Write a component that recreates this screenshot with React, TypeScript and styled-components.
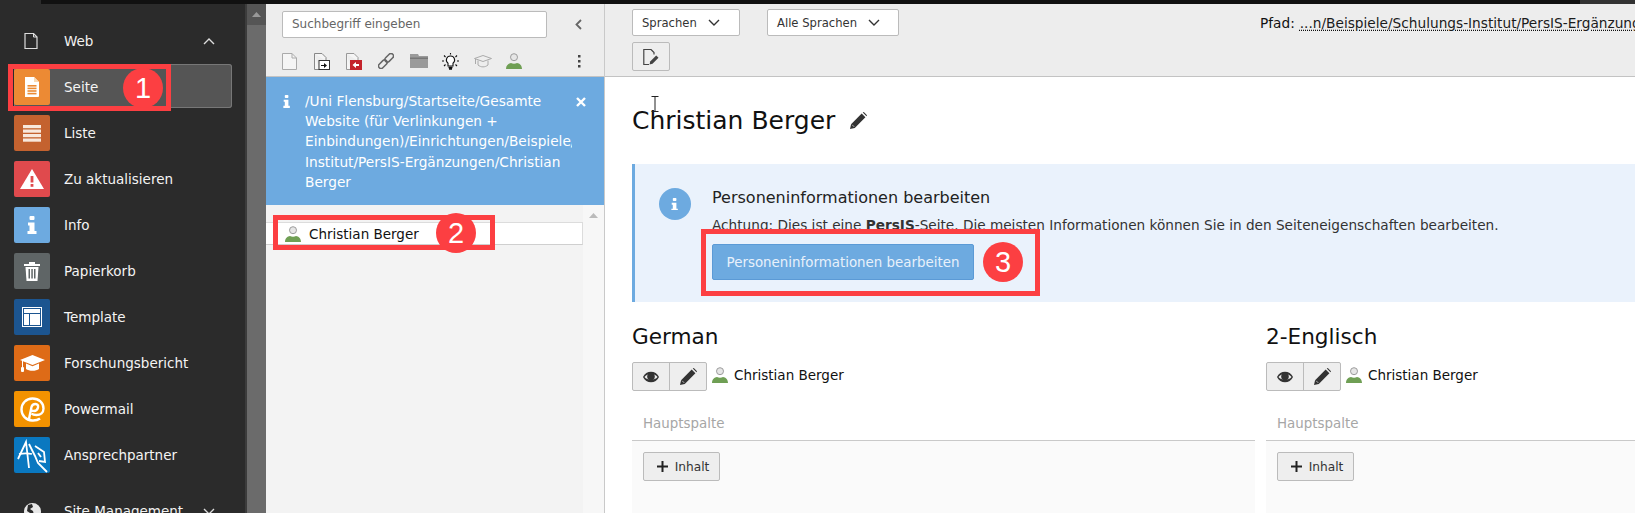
import React from "react";
import styled, { createGlobalStyle } from "styled-components";

const Global = createGlobalStyle`
  html, body { margin: 0; padding: 0; height: 100%; overflow: hidden; background: #fff; }
  body { font-family: "DejaVu Sans", Verdana, sans-serif; font-size: 12px; color: #111; }
  * { box-sizing: border-box; }
`;

const Page = styled.div`
  position: relative;
  width: 1635px;
  height: 513px;
  overflow: hidden;
  display: flex;
  flex-direction: column;
  background: #2b2b2b;
`;
const TopBar = styled.div`
  height: 4px;
  flex: none;
  margin-left: 41px;
  background: linear-gradient(to right, #111 0, #111 1539px, #333 1539px);
`;
const Body = styled.div`
  flex: 1;
  min-height: 0;
  display: flex;
`;
const Sidebar = styled.nav`
  width: 245px;
  flex: none;
  padding-top: 14px;
  background: #2b2b2b;
  color: #fff;
  overflow: hidden;
`;
const GroupHead = styled.div<{ $gap?: number }>`
  height: 46px;
  display: flex;
  align-items: center;
  padding-left: 24px;
  margin-top: ${(p) => p.$gap ?? 0}px;
  font-size: 13.5px;
  color: #f2f2f2;
`;
const GroupIcon = styled.span`
  width: 40px;
  display: flex;
  flex: none;
`;
const GroupChevron = styled.span`
  display: flex;
  margin-left: auto;
  margin-right: 30px;
`;
const MenuItem = styled.div<{ $active?: boolean }>`
  height: 44px;
  width: 218px;
  margin: 0 0 2px 14px;
  padding-top: 1px;
  display: flex;
  align-items: center;
  gap: 14px;
  font-size: 13.5px;
  color: #f4f4f4;
  border-radius: 3px;
  background: ${(p) => (p.$active ? "#555" : "transparent")};
  box-shadow: ${(p) => (p.$active ? "inset 0 0 0 1px #777" : "none")};
`;
const IconBox = styled.span<{ $bg: string }>`
  width: 36px;
  height: 36px;
  flex: none;
  border-radius: 2px;
  background: ${(p) => p.$bg};
  display: flex;
  align-items: center;
  justify-content: center;
  margin-top: 1px;
`;
const ScrollStrip = styled.div`
  width: 2px;
  flex: none;
  background: #3c3c3c;
`;
const DarkScroll = styled.div`
  width: 19px;
  flex: none;
  background: #6b6b6b;
  display: flex;
  flex-direction: column;
`;
const DarkScrollUp = styled.div`
  height: 21px;
  background: #555;
  display: flex;
  align-items: center;
  justify-content: center;
`;
const TreePanel = styled.section`
  width: 339px;
  flex: none;
  display: flex;
  flex-direction: column;
  background: #f3f3f3;
  border-right: 1px solid #c9c9c9;
`;
const TreeHead = styled.div`
  height: 73px;
  flex: none;
  background: #ededed;
  border-bottom: 1px solid #c3c3c3;
  padding: 7px 16px 0 16px;
`;
const SearchRow = styled.div`
  display: flex;
  align-items: center;
  height: 27px;
  justify-content: space-between;
  padding-right: 6px;
`;
const Search = styled.div`
  width: 265px;
  height: 27px;
  background: #fff;
  border: 1px solid #bbb;
  border-radius: 2px;
  padding-left: 9px;
  font-size: 12px;
  line-height: 25px;
  color: #666;
`;
const TreeTools = styled.div`
  display: flex;
  align-items: center;
  height: 20px;
  margin-top: 13px;
`;
const ToolSlot = styled.span`
  width: 32px;
  flex: none;
  display: flex;
`;
const Kebab = styled.span`
  margin-left: auto;
  margin-right: 7px;
  display: flex;
`;
const Notice = styled.div`
  height: 128px;
  flex: none;
  background: #6daae0;
  color: #fff;
  display: flex;
  padding: 14px 14px 0 17px;
  font-size: 13.7px;
  line-height: 20.2px;
`;
const NoticeIcon = styled.span`
  width: 22px;
  flex: none;
  padding-top: 2px;
`;
const NoticeText = styled.div`
  width: 267px;
  flex: none;
  overflow: hidden;
  white-space: nowrap;
`;
const NoticeClose = styled.span`
  margin-left: 4px;
  padding: 1px 0 0 0;
`;
const TreeBody = styled.div`
  flex: 1;
  display: flex;
`;
const TreeList = styled.div`
  flex: 1;
  padding-top: 17px;
`;
const TreeRow = styled.div`
  height: 23px;
  background: #fff;
  border: 1px solid #dcdcdc;
  border-bottom-color: #cfcfcf;
  border-left: 0;
  display: flex;
  align-items: center;
  gap: 8px;
  padding-left: 19px;
  font-size: 13.5px;
  color: #111;
`;
const TreeScroll = styled.div`
  width: 21px;
  flex: none;
  background: #f7f7f7;
  display: flex;
  justify-content: center;
  padding-top: 8px;
`;
const Main = styled.main`
  flex: 1;
  min-width: 0;
  display: flex;
  flex-direction: column;
  background: #fff;
`;
const DocHeader = styled.div`
  height: 73px;
  flex: none;
  background: #ededed;
  border-bottom: 1px solid #c3c3c3;
  padding: 5px 0 0 27px;
`;
const DocRow = styled.div`
  display: flex;
  align-items: center;
  height: 27px;
`;
const Select = styled.div<{ $w: number; $ml?: number }>`
  width: ${(p) => p.$w}px;
  height: 27px;
  margin-left: ${(p) => p.$ml ?? 0}px;
  background: #fff;
  border: 1px solid #bbb;
  border-radius: 2px;
  display: flex;
  align-items: center;
  gap: 11px;
  padding-left: 9px;
  font-size: 11.6px;
  color: #333;
`;
const PathBox = styled.div`
  margin-left: auto;
  width: 375px;
  overflow: hidden;
  white-space: nowrap;
  font-size: 13.7px;
  color: #111;
`;
const PathLink = styled.span`
  margin-left: 5px;
  text-decoration: underline dotted #111;
  text-underline-offset: 2px;
  color: #1b1b1b;
`;
const DocButton = styled.div`
  width: 38px;
  height: 29px;
  margin-top: 6px;
  background: #eee;
  border: 1px solid #bbb;
  border-radius: 2px;
  display: flex;
  align-items: center;
  justify-content: center;
`;
const Content = styled.div`
  flex: 1;
  padding: 24px 0 0 27px;
  min-height: 0;
`;
const TitleRow = styled.div`
  display: flex;
  align-items: center;
  gap: 15px;
  height: 38px;
`;
const Title = styled.h1`
  margin: 0;
  font-weight: 400;
  font-size: 25px;
  color: #111;
`;
const Callout = styled.div`
  margin-top: 25px;
  height: 138px;
  background: #eaf2fc;
  border-left: 3px solid #6daae0;
  display: flex;
  padding: 24px 0 0 24px;
`;
const CalloutIcon = styled.span`
  width: 32px;
  height: 32px;
  flex: none;
  border-radius: 50%;
  background: #6daae0;
  display: flex;
  align-items: center;
  justify-content: center;
`;
const CalloutBody = styled.div`
  margin-left: 21px;
`;
const CalloutTitle = styled.div`
  font-size: 16px;
  line-height: 20px;
  color: #222;
`;
const CalloutText = styled.p`
  margin: 9px 0 0;
  font-size: 13.65px;
  line-height: 16px;
  color: #333;
  white-space: nowrap;
`;
const PrimaryButton = styled.div`
  margin-top: 11px;
  width: 262px;
  height: 36px;
  background: #6daae0;
  border: 1px solid #5b9ad6;
  border-radius: 2px;
  display: flex;
  align-items: center;
  justify-content: center;
  font-size: 13.4px;
  color: #e8f1fb;
`;
const Columns = styled.div`
  display: flex;
  gap: 11px;
  margin-top: 21px;
`;
const Column = styled.div<{ $w: number }>`
  width: ${(p) => p.$w}px;
  flex: none;
`;
const ColumnTitle = styled.h2`
  margin: 0;
  font-weight: 400;
  font-size: 21.6px;
  line-height: 28px;
  color: #111;
`;
const ColumnTools = styled.div`
  display: flex;
  align-items: center;
  margin-top: 11px;
  gap: 5px;
  font-size: 13.5px;
`;
const BtnGroup = styled.div`
  display: flex;
  width: 75px;
  height: 29px;
  background: #eee;
  border: 1px solid #bbb;
  border-radius: 2px;
`;
const GroupBtn = styled.span<{ $first?: boolean }>`
  flex: 1;
  display: flex;
  align-items: center;
  justify-content: center;
  border-right: ${(p) => (p.$first ? "1px solid #bbb" : "0")};
`;
const PersonIcon = styled.span`
  display: flex;
  margin-top: -3px;
`;
const PersonName = styled.span`
  margin-left: 1px;
  margin-top: -4px;
  color: #111;
`;
const GridHead = styled.div`
  margin-top: 18px;
  height: 32px;
  padding-left: 11px;
  border-bottom: 1px solid #c9c9c9;
  color: #a6a6a6;
  font-size: 13.4px;
  line-height: 30px;
`;
const GridBody = styled.div`
  height: 80px;
  background: #fafafa;
  padding: 11px 0 0 11px;
`;
const AddButton = styled.div`
  width: 77px;
  height: 29px;
  background: #eee;
  border: 1px solid #bbb;
  border-radius: 2px;
  display: flex;
  align-items: center;
  justify-content: center;
  gap: 7px;
  padding-left: 3px;
  font-size: 12.2px;
  color: #333;
`;
const RedBox = styled.div<{ $l: number; $t: number; $w: number; $h: number }>`
  position: absolute;
  left: ${(p) => p.$l}px;
  top: ${(p) => p.$t}px;
  width: ${(p) => p.$w}px;
  height: ${(p) => p.$h}px;
  border: 5px solid #fc3f42;
  pointer-events: none;
`;
const Badge = styled.div<{ $x: number; $y: number }>`
  position: absolute;
  left: ${(p) => p.$x - 20}px;
  top: ${(p) => p.$y - 20}px;
  width: 40px;
  height: 40px;
  border-radius: 50%;
  background: #fc3f42;
  color: #fff;
  font-family: "Liberation Sans", Arial, sans-serif;
  font-size: 29px;
  line-height: 40px;
  text-align: center;
`;
const Cursor = styled.svg`
  position: absolute;
  left: 651px;
  top: 96px;
`;

type IP = { c?: string };

const PageOutline = () => (
  <svg width="14" height="16" viewBox="0 0 14 16" fill="none">
    <path d="M1 .5h8.500l3.500 3.500v11.500H1z" stroke="#ddd" strokeWidth="1.200" />
    <path d="M9.500.5V4H13" stroke="#ddd" />
  </svg>
);
const Chevron = ({ up, c = "#333" }: { up?: boolean; c?: string }) => (
  <svg width="12" height="7" viewBox="0 0 12 7" fill="none" stroke={c} strokeWidth="1.400">
    <path d={up ? "M1 6l5-5 5 5" : "M1 1l5 5 5-5"} />
  </svg>
);
const DocIcon = () => (
  <svg width="16" height="20" viewBox="0 0 16 20">
    <path d="M1 0h9l5 5v14a1 1 0 0 1-1 1H1z" fill="#fff" />
    <path d="M10 0l5 5h-5z" fill="#f8d9b4" />
    <g fill="#ec8a34">
      <rect x="3.500" y="8" width="9" height="1.600" />
      <rect x="3.500" y="10.600" width="9" height="1.600" />
      <rect x="3.500" y="13.200" width="9" height="1.600" />
      <rect x="3.500" y="15.800" width="9" height="1.600" />
    </g>
  </svg>
);
const ListIcon = () => (
  <svg width="18" height="17" viewBox="0 0 18 17" fill="#f8e8dc">
    <rect y="0" width="18" height="3.200" />
    <rect y="4.500" width="18" height="3.200" />
    <rect y="9" width="18" height="3.200" />
    <rect y="13.500" width="18" height="3.200" />
  </svg>
);
const WarnIcon = () => (
  <svg width="24" height="20" viewBox="0 0 24 20">
    <path d="M12 0L24 20H0z" fill="#fff" />
    <rect x="10.600" y="7" width="2.800" height="6.500" fill="#e04a4d" />
    <rect x="10.600" y="15" width="2.800" height="2.800" fill="#e04a4d" />
  </svg>
);
const InfoGlyph = ({ c = "#fff", s = 1 }: IP & { s?: number }) => (
  <svg width={10 * s} height={18 * s} viewBox="0 0 10 18" fill={c}>
    <rect x="2.500" y="0" width="5" height="4" rx="1" />
    <path d="M1 6.500h6.500V15H9.500v3H.5v-3h2v-5.500H1z" />
  </svg>
);
const TrashIcon = () => (
  <svg width="16" height="19" viewBox="0 0 16 19" fill="#fff">
    <rect x="0" y="2" width="16" height="2" />
    <rect x="5" y="0" width="6" height="2.500" />
    <path d="M1.500 5h13l-1 14h-11z" />
    <g fill="#5f6566">
      <rect x="4.500" y="7" width="1.500" height="9.500" />
      <rect x="7.300" y="7" width="1.500" height="9.500" />
      <rect x="10" y="7" width="1.500" height="9.500" />
    </g>
  </svg>
);
const TemplateIcon = () => (
  <svg width="20" height="20" viewBox="0 0 20 20" fill="none">
    <rect x=".5" y=".5" width="19" height="19" stroke="#fff" />
    <rect x="2" y="2" width="16" height="4" fill="#fff" />
    <rect x="2" y="7" width="5" height="11" fill="#fff" />
    <rect x="8" y="7" width="10" height="11" fill="#fff" />
  </svg>
);
const CapIcon = () => (
  <svg width="25" height="17" viewBox="0 0 25 17" fill="#fff">
    <path d="M12.500 0L25 5l-12.500 5L3 6.200V12H2V5.800L0 5z" />
    <path d="M6 8.500l6.500 2.700L19 8.500V14c-3 2.400-10 2.400-13 0z" />
    <rect x="1" y="12" width="3" height="5" rx="1" />
  </svg>
);
const PowermailIcon = () => (
  <svg width="25" height="25" viewBox="0 0 25 25" fill="none" stroke="#fff" strokeWidth="2.400">
    <path d="M20 21.500c-2 1.500-5 2.200-8 2C6 23 1.500 18.500 1.500 12.500S6 1.500 12.500 1.500 23.500 6 23.500 11.500c0 4-3 6.500-7 6.500-2.500 0-4-.5-5-1.500" />
    <path d="M9 22l2.500-12c.5-2 2-3 4-3s3 1.500 2.500 3.500-2 3.500-4 3.500-2.500-1-2.500-1" />
  </svg>
);
const PartnerIcon = () => (
  <svg width="36" height="36" viewBox="0 0 36 36" fill="none" stroke="#fff" strokeWidth="1.800">
    <path d="M4 22l8-17 3 26" />
    <path d="M5 17c5-1 9-1 13 0" />
    <path d="M15 7l6 12 3 7 9 9" />
    <path d="M21 9l9 6 1 10-6-1" />
    <path d="M24 16l3 4" />
  </svg>
);
const GlobeIcon = () => (
  <svg width="17" height="17" viewBox="0 0 17 17">
    <circle cx="8.500" cy="8.500" r="8.500" fill="#e8e8e8" />
    <path d="M4 2l4-1 1 3-3 2 3 2 1 4-3 3-1-5-3-2z" fill="#2b2b2b" />
  </svg>
);
const ChevronLeft = () => (
  <svg width="7" height="11" viewBox="0 0 7 11" fill="none" stroke="#666" strokeWidth="1.800">
    <path d="M6 1L1.500 5.500 6 10" />
  </svg>
);
const NewPage = () => (
  <svg width="15" height="17" viewBox="0 0 15 17" fill="none" stroke="#aaa">
    <path d="M.5.500h9.500l4.500 4.500v11.500H.5z" fill="#f5f5f5" />
    <path d="M10 .5V5h4.500" />
  </svg>
);
const MoveIn = () => (
  <svg width="16" height="17" viewBox="0 0 16 17" fill="none" stroke="#888">
    <path d="M.5.500H8l4 4V8M.5.500v16H5" fill="#f5f5f5" />
    <rect x="5" y="7.500" width="10.500" height="9" fill="#fff" stroke="#333" />
    <path d="M7 12h3v-2l3 2.500-3 2.500v-2H7z" fill="#111" stroke="none" />
  </svg>
);
const MoveOut = () => (
  <svg width="16" height="17" viewBox="0 0 16 17" fill="none" stroke="#999">
    <path d="M.5.500H8l4 4V8M.5.500v16H5" fill="#f5f5f5" />
    <rect x="4" y="7" width="12" height="10" fill="#c4232b" stroke="none" />
    <path d="M13 11h-3V9l-3.500 3 3.500 3v-2h3z" fill="#fff" stroke="none" />
  </svg>
);
const LinkIcon = () => (
  <svg width="16" height="16" viewBox="0 0 16 16" fill="none" stroke="#666" strokeWidth="1.500">
    <g transform="rotate(-45 8 8)">
      <rect x="-1.500" y="5.500" width="10" height="5" rx="2.500" />
      <rect x="7.500" y="5.500" width="10" height="5" rx="2.500" />
    </g>
  </svg>
);
const Folder = () => (
  <svg width="18" height="14" viewBox="0 0 18 14">
    <path d="M0 0h8l1 2h9v12H0z" fill="#9a9a9a" />
    <rect x="0" y="3.500" width="18" height="1.500" fill="#777" />
  </svg>
);
const Bulb = () => (
  <svg width="17" height="17" viewBox="0 0 17 17" fill="none" stroke="#111" strokeWidth="1.100">
    <path d="M8.500 3a4 4 0 0 1 2.500 7.200V13H6v-2.800A4 4 0 0 1 8.500 3z" fill="#fff" />
    <path d="M6.500 14.500h4M7 16h3" strokeWidth="1.300" />
    <path d="M8.500 0v1.500M2 2.500l1.500 1.500M15 2.500L13.500 4M0 8h2M15 8h2M2 13l1.500-1.500M15 13l-1.500-1.500" />
  </svg>
);
const CapOutline = () => (
  <svg width="18" height="13" viewBox="0 0 18 13" fill="none" stroke="#aaa">
    <path d="M9 .5L17.500 3.500 9 6.500.5 3.500z" fill="#eee" />
    <path d="M4 5.500V10c3 2.500 7 2.500 10 0V5.500" />
    <path d="M1.500 4v5" />
  </svg>
);
const User = () => (
  <svg width="16" height="16" viewBox="0 0 16 16">
    <circle cx="8" cy="4.200" r="3.500" fill="#e6e6e6" stroke="#9b9b9b" />
    <path d="M0 16c0-3.800 2.500-5.700 5-6 1.500 1 4.500 1 6 0 2.500.3 5 2.200 5 6z" fill="#6f9f54" />
  </svg>
);
const Dots = () => (
  <svg width="3" height="13" viewBox="0 0 3 13" fill="#444">
    <rect width="2.500" height="2.500" />
    <rect y="5" width="2.500" height="2.500" />
    <rect y="10" width="2.500" height="2.500" />
  </svg>
);
const Close = () => (
  <svg width="10" height="10" viewBox="0 0 10 10" stroke="#fff" strokeWidth="2.400">
    <path d="M1 1l8 8M9 1l-8 8" />
  </svg>
);
const Arrow = ({ c }: { c: string }) => (
  <svg width="9" height="5" viewBox="0 0 9 5" fill={c}>
    <path d="M4.500 0L9 5H0z" />
  </svg>
);
const PageEdit = () => (
  <svg width="16" height="16" viewBox="0 0 16 16" fill="none" stroke="#444">
    <path d="M6 15.500H.8V.5H8l3 3v2" strokeWidth="1.200" />
    <path d="M6.500 15.500l.7-3 6-6 2.300 2.300-6 6z" fill="#444" stroke="none" />
  </svg>
);
const Pencil = () => (
  <svg width="17" height="17" viewBox="0 0 16 16" fill="#333">
    <path d="M0 16l1-4.500L11 1.500 14.500 5 4.500 15zM12 .5l1-.5 3 3-.5 1z" />
    <path d="M2 12l2 2" stroke="#fff" strokeWidth=".6" />
  </svg>
);
const Eye = () => (
  <svg width="16" height="12" viewBox="0 0 16 12">
    <path d="M0 6c3-7 13-7 16 0-3 7-13 7-16 0z" fill="#333" />
    <path d="M1.500 6C4 2 12 2 14.500 6 12 9.500 4 9.500 1.500 6z" fill="#eee" />
    <circle cx="8" cy="5.500" r="3.800" fill="#333" />
  </svg>
);
const Plus = () => (
  <svg width="11" height="11" viewBox="0 0 11 11" fill="#222">
    <rect x="4.500" width="2" height="11" />
    <rect y="4.500" width="11" height="2" />
  </svg>
);

const menu: { label: string; bg: string; icon: React.ReactNode; active?: boolean }[] = [
  { label: "Seite", bg: "#ec8a34", icon: <DocIcon />, active: true },
  { label: "Liste", bg: "#c4622f", icon: <ListIcon /> },
  { label: "Zu aktualisieren", bg: "#e04a4d", icon: <WarnIcon /> },
  { label: "Info", bg: "#6daae0", icon: <InfoGlyph /> },
  { label: "Papierkorb", bg: "#5f6566", icon: <TrashIcon /> },
  { label: "Template", bg: "#1c5590", icon: <TemplateIcon /> },
  { label: "Forschungsbericht", bg: "#de6b17", icon: <CapIcon /> },
  { label: "Powermail", bg: "#f39200", icon: <PowermailIcon /> },
  { label: "Ansprechpartner", bg: "#0a78c0", icon: <PartnerIcon /> },
];

const tools = [<NewPage />, <MoveIn />, <MoveOut />, <LinkIcon />, <Folder />, <Bulb />, <CapOutline />, <User />];

const LangColumn = ({ title, width }: { title: string; width: number }) => (
  <Column $w={width}>
    <ColumnTitle>{title}</ColumnTitle>
    <ColumnTools>
      <BtnGroup>
        <GroupBtn $first>
          <Eye />
        </GroupBtn>
        <GroupBtn>
          <Pencil />
        </GroupBtn>
      </BtnGroup>
      <PersonIcon>
        <User />
      </PersonIcon>
      <PersonName>Christian Berger</PersonName>
    </ColumnTools>
    <GridHead>Hauptspalte</GridHead>
    <GridBody>
      <AddButton>
        <Plus />
        Inhalt
      </AddButton>
    </GridBody>
  </Column>
);

export default function App() {
  return (
    <Page>
      <Global />
      <TopBar />
      <Body>
        <Sidebar>
          <GroupHead>
            <GroupIcon>
              <PageOutline />
            </GroupIcon>
            Web
            <GroupChevron>
              <Chevron up c="#ddd" />
            </GroupChevron>
          </GroupHead>
          {menu.map((m) => (
            <MenuItem key={m.label} $active={m.active}>
              <IconBox $bg={m.bg}>{m.icon}</IconBox>
              {m.label}
            </MenuItem>
          ))}
          <GroupHead $gap={12}>
            <GroupIcon>
              <GlobeIcon />
            </GroupIcon>
            Site Management
            <GroupChevron>
              <Chevron c="#ddd" />
            </GroupChevron>
          </GroupHead>
        </Sidebar>
        <ScrollStrip />
        <DarkScroll>
          <DarkScrollUp>
            <Arrow c="#999" />
          </DarkScrollUp>
        </DarkScroll>
        <TreePanel>
          <TreeHead>
            <SearchRow>
              <Search>Suchbegriff eingeben</Search>
              <ChevronLeft />
            </SearchRow>
            <TreeTools>
              {tools.map((t, i) => (
                <ToolSlot key={i}>{t}</ToolSlot>
              ))}
              <Kebab>
                <Dots />
              </Kebab>
            </TreeTools>
          </TreeHead>
          <Notice>
            <NoticeIcon>
              <InfoGlyph s={0.72} />
            </NoticeIcon>
            <NoticeText>
              /Uni Flensburg/Startseite/Gesamte
              <br />
              Website (für Verlinkungen +
              <br />
              Einbindungen)/Einrichtungen/Beispiele/Schulungs-
              <br />
              Institut/PersIS-Ergänzungen/Christian
              <br />
              Berger
            </NoticeText>
            <NoticeClose>
              <Close />
            </NoticeClose>
          </Notice>
          <TreeBody>
            <TreeList>
              <TreeRow>
                <User />
                Christian Berger
              </TreeRow>
            </TreeList>
            <TreeScroll>
              <Arrow c="#bbb" />
            </TreeScroll>
          </TreeBody>
        </TreePanel>
        <Main>
          <DocHeader>
            <DocRow>
              <Select $w={108}>
                Sprachen
                <Chevron />
              </Select>
              <Select $w={132} $ml={27}>
                Alle Sprachen
                <Chevron />
              </Select>
              <PathBox>
                Pfad:
                <PathLink>...n/Beispiele/Schulungs-Institut/PersIS-Ergänzungen/Christian Berger</PathLink>
              </PathBox>
            </DocRow>
            <DocButton>
              <PageEdit />
            </DocButton>
          </DocHeader>
          <Content>
            <TitleRow>
              <Title>Christian Berger</Title>
              <Pencil />
            </TitleRow>
            <Callout>
              <CalloutIcon>
                <InfoGlyph s={0.72} />
              </CalloutIcon>
              <CalloutBody>
                <CalloutTitle>Personeninformationen bearbeiten</CalloutTitle>
                <CalloutText>
                  Achtung: Dies ist eine <b>PersIS</b>-Seite. Die meisten Informationen können Sie in den
                  Seiteneigenschaften bearbeiten.
                </CalloutText>
                <PrimaryButton>Personeninformationen bearbeiten</PrimaryButton>
              </CalloutBody>
            </Callout>
            <Columns>
              <LangColumn title="German" width={623} />
              <LangColumn title="2-Englisch" width={369} />
            </Columns>
          </Content>
        </Main>
      </Body>
      <RedBox $l={8} $t={64} $w={163} $h={47} />
      <Badge $x={143} $y={88}>1</Badge>
      <RedBox $l={273} $t={215} $w={222} $h={35} />
      <Badge $x={456} $y={233}>2</Badge>
      <RedBox $l={701} $t={229} $w={339} $h={67} />
      <Badge $x={1003} $y={262}>3</Badge>
      <Cursor width="8" height="16" viewBox="0 0 8 16" fill="none" stroke="#222">
        <path d="M.5.500h7M4 .5v15M.5 15.500h7" />
      </Cursor>
    </Page>
  );
}
